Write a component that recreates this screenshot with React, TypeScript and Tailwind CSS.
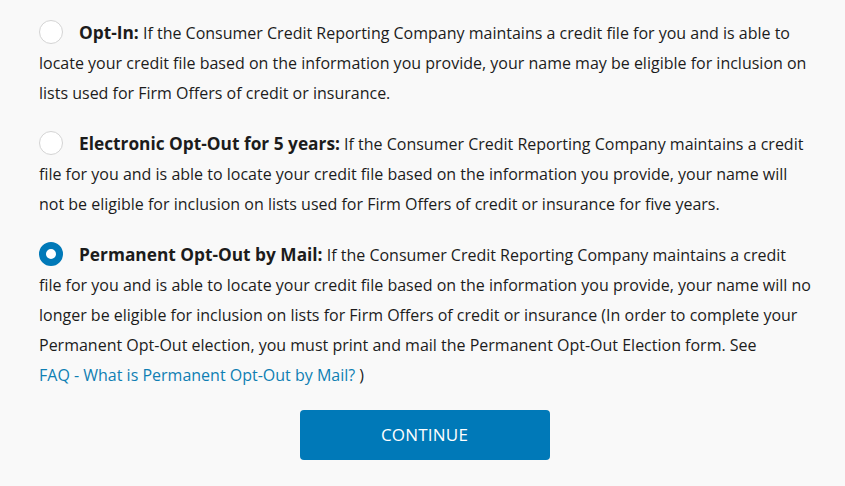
import React, { useState } from "react";

type Option = {
  id: string;
  title: string;
  body: React.ReactNode;
};

const options: Option[] = [
  {
    id: "optin",
    title: "Opt-In:",
    body: "If the Consumer Credit Reporting Company maintains a credit file for you and is able to locate your credit file based on the information you provide, your name may be eligible for inclusion on lists used for Firm Offers of credit or insurance.",
  },
  {
    id: "electronic",
    title: "Electronic Opt-Out for 5 years:",
    body: "If the Consumer Credit Reporting Company maintains a credit file for you and is able to locate your credit file based on the information you provide, your name will not be eligible for inclusion on lists used for Firm Offers of credit or insurance for five years.",
  },
  {
    id: "permanent",
    title: "Permanent Opt-Out by Mail:",
    body: (
      <>
        If the Consumer Credit Reporting Company maintains a credit file for you and is able to locate your credit file based on the information you provide, your name will no longer be eligible for inclusion on lists for Firm Offers of credit or insurance (In order to complete your Permanent Opt-Out election, you must print and mail the Permanent Opt-Out Election form. See{" "}
        <a href="#" className="whitespace-nowrap text-[#0f7fb3] no-underline">
          FAQ - What is Permanent Opt-Out by Mail?
        </a>{" "}
        )
      </>
    ),
  },
];

function Radio({ checked }: { checked: boolean }) {
  return checked ? (
    <span className="inline-block align-[-5px] w-6 h-6 rounded-full border-[7px] border-[#0079b8] bg-white mr-[16px]" />
  ) : (
    <span className="inline-block align-[-5px] w-6 h-6 rounded-full border border-[#d4d4d4] bg-white mr-[16px]" />
  );
}

export default function App() {
  const [selected, setSelected] = useState("permanent");

  return (
    <div className="min-h-[486px] bg-[#f9f9f9] font-['Open_Sans',sans-serif] text-[16px] leading-[30px] text-[#1c1c1c] pl-[39px] pr-[33px] pt-[18px]">
      {options.map((o) => (
        <div key={o.id} className="mb-[21px] cursor-pointer" onClick={() => setSelected(o.id)}>
          <Radio checked={selected === o.id} />
          <span className="font-bold text-[17.3px]">{o.title}</span> {o.body}
        </div>
      ))}
      <div className="flex justify-center pr-[2px] -mt-[1px]">
        <button className="w-[250px] h-[50px] rounded-[4px] bg-[#0079b8] text-white text-[17px] tracking-[0.2px]">
          CONTINUE
        </button>
      </div>
    </div>
  );
}
